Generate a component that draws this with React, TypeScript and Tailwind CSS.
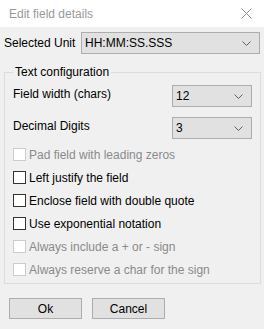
import type { ReactNode } from 'react';

function Chevron() {
    return (
        <svg width="9" height="5" viewBox="0 0 9 5" className="shrink-0">
            <path d="M0.5 0.5 L4.5 4.5 L8.5 0.5" fill="none" stroke="#606060" strokeWidth="1" />
        </svg>
    );
}

function Combo({ value, className }: { value: string; className: string }) {
    return (
        <div
            className={`flex h-[22px] items-center justify-between border border-[#adadad] bg-[#e1e1e1] pl-[3px] pr-[8px] text-black ${className}`}>
            <span>{value}</span>
            <Chevron />
        </div>
    );
}

function Check({ label, disabled }: { label: string; disabled?: boolean }) {
    return (
        <div className="flex h-[23px] items-center">
            <span
                className={`h-[13px] w-[13px] shrink-0 border bg-white ${
                    disabled ? 'border-[#cccccc]' : 'border-[#333333]'
                }`}
            />
            <span className={`ml-[3px] ${disabled ? 'text-[#8a8a8a]' : 'text-black'}`}>{label}</span>
        </div>
    );
}

function Button({ children }: { children: ReactNode }) {
    return (
        <button className="flex h-[21px] w-[73px] items-center justify-center border border-[#adadad] bg-[#e1e1e1] text-black">
            {children}
        </button>
    );
}

export default function App() {
    return (
        <div
            className="flex h-[329px] w-[264px] flex-col bg-[#f0f0f0] text-[12px] leading-none"
            style={{ fontFamily: '"Liberation Sans", Arial, sans-serif' }}>
            {/* title bar */}
            <div className="flex h-[27px] items-center justify-between bg-white pl-[9px] pr-[12px]">
                <span className="text-[#999999]">Edit field details</span>
                <svg width="11" height="11" viewBox="0 0 11 11">
                    <path d="M0.5 0.5 L10.5 10.5 M10.5 0.5 L0.5 10.5" stroke="#8a8a8a" strokeWidth="1" />
                </svg>
            </div>

            <div className="flex items-center pl-[4px] pr-[4px] pt-[5px]">
                <span className="w-[77px] text-black">Selected Unit</span>
                <Combo value="HH:MM:SS.SSS" className="flex-1" />
            </div>

            {/* group box */}
            <div className="relative ml-[4px] mr-[3px] mt-[18px] h-[212px] border border-[#dcdcdc] px-[8px] pt-[12px]">
                <span className="absolute left-[8px] top-[-7px] bg-[#f0f0f0] px-[2px] text-black">
                    Text configuration
                </span>
                <div className="flex items-center justify-between">
                    <span className="-mt-[4px] text-black">Field width (chars)</span>
                    <Combo value="12" className="w-[80px]" />
                </div>
                <div className="mt-[10px] flex items-center justify-between">
                    <span className="-mt-[4px] text-black">Decimal Digits</span>
                    <Combo value="3" className="w-[80px]" />
                </div>
                <div className="mt-[4px] flex flex-col">
                    <Check label="Pad field with leading zeros" disabled />
                    <Check label="Left justify the field" />
                    <Check label="Enclose field with double quote" />
                    <Check label="Use exponential notation" />
                    <Check label="Always include a + or - sign" disabled />
                    <Check label="Always reserve a char for the sign" disabled />
                </div>
            </div>

            <div className="ml-[9px] mt-[14px] flex gap-[10px]">
                <Button>Ok</Button>
                <Button>Cancel</Button>
            </div>
        </div>
    );
}
